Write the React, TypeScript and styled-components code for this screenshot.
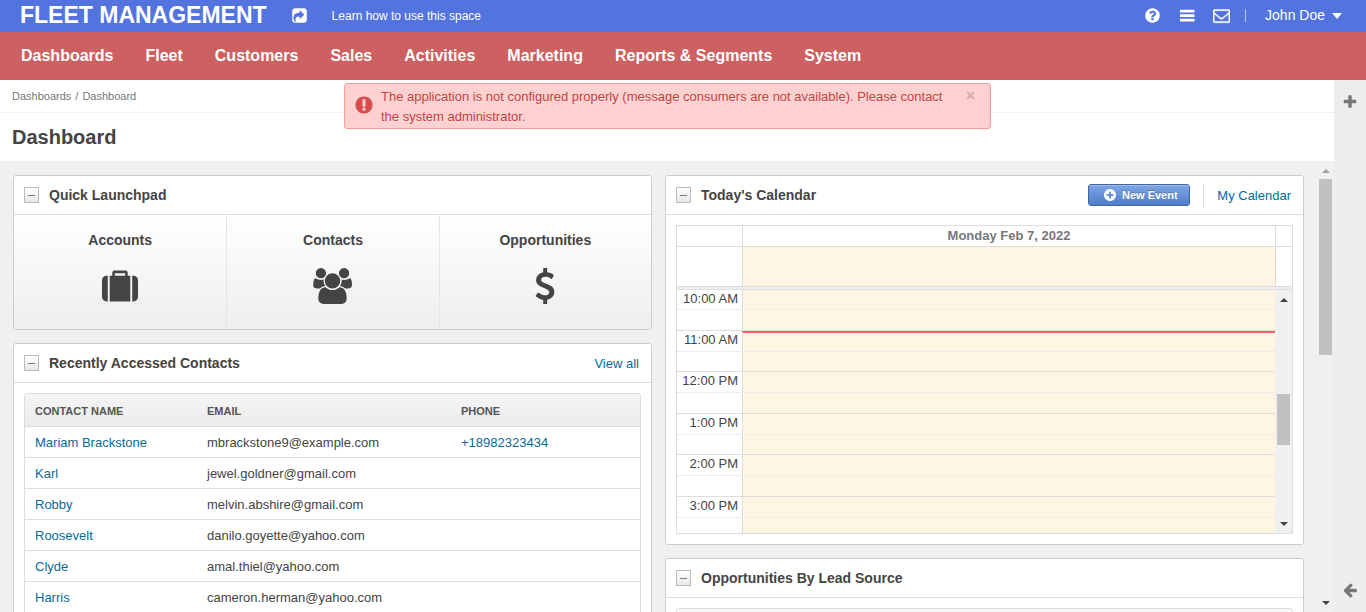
import React from 'react';
import styled, { createGlobalStyle, css } from 'styled-components';

const GlobalStyle = createGlobalStyle`
  *, *::before, *::after { box-sizing: border-box; }
  body {
    margin: 0;
    background: #fff;
    color: #444;
    font: 13px/20px "Liberation Sans", Arial, sans-serif;
  }
  h1, h2, h3, p, ul { margin: 0; padding: 0; }
  a { color: #086a95; text-decoration: none; }
  button { font-family: inherit; cursor: pointer; }
`;

/* ---------- Icons ---------- */

const icons = {
  share: 'M1005 1197l352-352q19-19 19-45t-19-45l-352-352q-30-31-69-14-40 17-40 59v160q-119 0-216 19.5t-162.5 51-114 79-76.5 95.5-44.5 109-21.5 111.5-5 110.5q0 181 167 404 11 12 25 12 7 0 13-3 22-9 19-33-44-354 62-473 46-52 130-75.5t224-23.5v160q0 42 40 59 12 5 24 5 26 0 45-19zm659-781v960q0 119-84.5 203.5t-203.5 84.5h-960q-119 0-203.5-84.5t-84.5-203.5v-960q0-119 84.5-203.5t203.5-84.5h960q119 0 203.5 84.5t84.5 203.5z',
  help: 'M1024 1376v-192q0-14-9-23t-23-9h-192q-14 0-23 9t-9 23v192q0 14 9 23t23 9h192q14 0 23-9t9-23zm256-672q0-88-55.5-163t-138.5-116-170-41q-243 0-371 213-15 24 8 42l132 100q7 6 19 6 16 0 25-12 53-68 86-92 34-24 86-24 48 0 85.5 26t37.5 59q0 38-20 61t-68 45q-63 28-115.5 86.5t-52.5 125.5v36q0 14 9 23t23 9h192q14 0 23-9t9-23q0-19 21.5-49.5t54.5-49.5q32-18 49-28.5t46-35 44.5-48 28-60.5 12.5-81zm384 192q0 209-103 385.5t-279.5 279.5-385.5 103-385.5-103-279.5-279.5-103-385.5 103-385.5 279.5-279.5 385.5-103 385.5 103 279.5 279.5 103 385.5z',
  list: 'M112 190h1624v300h-1624zM112 704h1624v300h-1624zM112 1210h1624v300h-1624z',
  mail: 'M1664 1504v-768q-32 36-69 66-268 206-426 338-51 43-83 67t-86.5 48.5-102.5 24.5h-2q-48 0-102.5-24.5t-86.5-48.5-83-67q-158-132-426-338-37-30-69-66v768q0 13 9.5 22.5t22.5 9.5h1472q13 0 22.5-9.5t9.5-22.5zm0-1051v-24.5l-.5-13-3-12.5-5.5-9-9-7.5-14-2.5h-1472q-13 0-22.5 9.5t-9.5 22.5q0 168 147 284 193 152 401 317 6 5 35 29.5t46 37.5 44.5 31.5 50.5 27.5 43 9h2q20 0 43-9t50.5-27.5 44.5-31.5 46-37.5 35-29.5q208-165 401-317 54-43 100.5-115.5t46.5-131.5zm128-37v1088q0 66-47 113t-113 47h-1472q-66 0-113-47t-47-113v-1088q0-66 47-113t113-47h1472q66 0 113 47t47 113z',
  plus: 'M1600 736v192q0 40-28 68t-68 28h-416v416q0 40-28 68t-68 28h-192q-40 0-68-28t-28-68v-416h-416q-40 0-68-28t-28-68v-192q0-40 28-68t68-28h416v-416q0-40 28-68t68-28h192q40 0 68 28t28 68v416h416q40 0 68 28t28 68z',
  arrowLeft: 'M1664 896v128q0 53-32.5 90.5t-84.5 37.5h-704l293 294q38 36 38 90t-38 90l-75 76q-37 37-90 37-52 0-91-37l-651-652q-37-37-37-90 0-52 37-91l651-650q38-38 91-38 52 0 90 38l75 74q38 38 38 91t-38 91l-293 293h704q52 0 84.5 37.5t32.5 90.5z',
  plusCircle: 'M1344 960v-128q0-26-19-45t-45-19h-256v-256q0-26-19-45t-45-19h-128q-26 0-45 19t-19 45v256h-256q-26 0-45 19t-19 45v128q0 26 19 45t45 19h256v256q0 26 19 45t45 19h128q26 0 45-19t19-45v-256h256q26 0 45-19t19-45zm320-64q0 209-103 385.5t-279.5 279.5-385.5 103-385.5-103-279.5-279.5-103-385.5 103-385.5 279.5-279.5 385.5-103 385.5 103 279.5 279.5 103 385.5z',
  alert: 'M896 128q209 0 385.5 103t279.5 279.5 103 385.5-103 385.5-279.5 279.5-385.5 103-385.5-103-279.5-279.5-103-385.5 103-385.5 279.5-279.5 385.5-103zm128 1247v-190q0-14-9-23.5t-22-9.5h-192q-13 0-23 10t-10 23v190q0 13 10 23t23 10h192q13 0 22-9.5t9-23.5zm-2-344l18-621q0-12-10-18-10-8-24-8h-220q-14 0-24 8-10 6-10 18l17 621q0 10 10 17.5t24 7.5h185q14 0 23.5-7.5t10.5-17.5z',
  suitcase: 'M640 384h512v-128h-512v128zM288 384v1280h-64q-92 0-158-66t-66-158v-832q0-92 66-158t158-66h64zM1408 384v1280h-1024v-1280h128v-160q0-40 28-68t68-28h576q40 0 68 28t28 68v160h128zM1792 608v832q0 92-66 158t-158 66h-64v-1280h64q92 0 158 66t66 158z',
  group: 'M593 896q-162 5-265 128h-134q-82 0-138-40.5t-56-118.5q0-353 124-353 6 0 43.5 21t97.5 42.5 119 21.5q67 0 133-23-5 37-5 66 0 159 93 256zm1071 637q0 120-73 189.5t-194 69.5h-874q-121 0-194-69.5t-73-189.5q0-53 3.5-103.5t14-109 26.5-108.5 43-97.5 62-81 85.5-53.5 111.5-20q10 0 43 21.5t73 48 107 48 135 21.5 135-21.5 107-48 73-48 43-21.5q61 0 111.5 20t85.5 53.5 62 81 43 97.5 26.5 108.5 14 109 3.5 103.5zm-1024-1277q0 106-75 181t-181 75-181-75-75-181 75-181 181-75 181 75 75 181zm704 384q0 159-112.5 271.5t-271.5 112.5-271.5-112.5-112.5-271.5 112.5-271.5 271.5-112.5 271.5 112.5 112.5 271.5zm576 225q0 78-56 118.5t-138 40.5h-134q-103-123-265-128 93-97 93-256 0-29-5-66 66 23 133 23 59 0 119-21.5t97.5-42.5 43.5-21q124 0 124 353zm-128-609q0 106-75 181t-181 75-181-75-75-181 75-181 181-75 181 75 75 181z',
  dollar: 'M1362 1185q0 153-99.5 263.5t-258.5 136.5v175q0 14-9 23t-23 9h-135q-13 0-22.5-9.5t-9.5-22.5v-175q-66-9-127.5-31t-101.5-44.5-74-48-46.5-37.5-17.5-18q-17-21-2-41l103-135q7-10 23-12 15-2 24 9l2 2q113 99 243 125 37 8 74 8 81 0 142.5-43t61.5-122q0-28-15-53t-33.5-42-58.5-37.5-66-32-80-32.5q-39-16-61.5-25t-61.5-26.5-62.5-31-56.5-35.5-53.5-42.5-43.5-49-35.5-58-21-66.5-8.5-78q0-138 98-242t255-134v-180q0-13 9.5-22.5t22.5-9.5h135q14 0 23 9t9 23v176q57 6 110.5 23t87 33.5 63.5 37.5 39 29 15 14q17 18 5 38l-81 146q-8 15-23 16-14 3-27-7-3-3-14.5-12t-39-26.5-58.5-32-74.5-26-85.5-11.5q-95 0-155 43t-60 111q0 26 8.5 48t29.5 41.5 39.5 33 56 31 60.5 27 70 27.5q53 20 81 31.5t76 35 75.5 42.5 62 50 53 63.5 31.5 76.5 13 94z',
};

type IconName = keyof typeof icons;

type IconProps = { name: IconName; size: number; bold?: boolean };

const Icon = ({ name, size, bold }: IconProps) => {
  const boxWidth = name === 'group' ? 1920 : 1792;
  return (
    <svg
      width={Math.round((size * boxWidth) / 1792)}
      height={size}
      viewBox={`0 0 ${boxWidth} 1792`}
      fill="currentColor"
      stroke={bold ? 'currentColor' : 'none'}
      strokeWidth={bold ? 50 : 0}
      aria-hidden="true"
    >
      <path d={icons[name]} />
    </svg>
  );
};

/* ---------- Page frame ---------- */

const Page = styled.div`
  position: relative;
  display: flex;
  flex-direction: column;
  height: 100vh;
  overflow: hidden;
`;

const TopBar = styled.header`
  display: flex;
  align-items: center;
  flex: none;
  height: 32px;
  padding: 0 24px 1px 20px;
  background: #5373df;
  color: #fff;
  a { color: #fff; }
`;

const Brand = styled.a`
  font-size: 23px;
  font-weight: bold;
  line-height: 31px;
  white-space: nowrap;
`;

const IconButton = styled.button`
  display: flex;
  padding: 0;
  border: 0;
  background: none;
  color: inherit;
`;

const ShareButton = styled(IconButton)`
  margin: 0 24px 0 24px;
`;

const LearnLink = styled.a`
  font-size: 12px;
`;

const UserTools = styled.div`
  display: flex;
  align-items: center;
  gap: 18px;
  margin-left: auto;
`;

const UserMenu = styled.button`
  display: flex;
  align-items: center;
  gap: 7px;
  margin-left: -3px;
  padding: 0 0 0 20px;
  border: 0;
  background: linear-gradient(#b9c6f2, #b9c6f2) 0 50% / 1px 13px no-repeat;
  color: #fff;
  font-size: 14px;
  line-height: 21px;
`;

const Caret = styled.span`
  border: 5px solid transparent;
  border-top: 6px solid currentColor;
  border-bottom: 0;
`;

const MainNav = styled.nav`
  display: flex;
  flex: none;
  gap: 32px;
  height: 48px;
  padding: 0 21px;
  background: #cd6060;
  a {
    color: #fff;
    font-size: 16px;
    font-weight: bold;
    line-height: 48px;
    white-space: nowrap;
  }
`;

const Workspace = styled.div`
  display: flex;
  flex: 1;
  min-height: 0;
`;

const Main = styled.main`
  display: flex;
  flex: 1;
  flex-direction: column;
  min-width: 0;
`;

const SideRail = styled.aside`
  display: flex;
  flex: none;
  flex-direction: column;
  align-items: center;
  justify-content: space-between;
  width: 32px;
  padding: 14px 0;
  background: #ededed;
  color: #777;
`;

const Breadcrumbs = styled.nav`
  display: flex;
  flex: none;
  gap: 4px;
  height: 33px;
  padding: 0 12px;
  border-bottom: 1px solid #f0f0f0;
  color: #777;
  font-size: 11px;
  line-height: 33px;
  a { color: #777; }
`;

const PageTitle = styled.h1`
  flex: none;
  padding: 0 12px;
  font-size: 20px;
  line-height: 48px;
`;

/* ---------- Notification ---------- */

const Alert = styled.div`
  position: absolute;
  top: 83px;
  left: 50%;
  z-index: 2;
  display: flex;
  align-items: flex-start;
  width: 647px;
  margin-left: -339px;
  padding: 3px 15px 1px 9px;
  border: 1px solid #f79a9a;
  border-radius: 3px;
  background: #fed1d1;
  color: #c9393a;
  text-shadow: 0 1px 0 rgba(255, 255, 255, 0.5);
  p { flex: 1; margin-left: 7px; }
`;

const AlertMark = styled.span`
  display: flex;
  align-self: center;
  padding-bottom: 4px;
  color: #d84b4b;
`;

const CloseButton = styled(IconButton)`
  margin-left: 16px;
  color: #dba9a9;
  font-size: 16px;
  font-weight: bold;
  line-height: 18px;
`;

/* ---------- Scrollbars ---------- */

const Track = styled.div`
  display: flex;
  flex: none;
  flex-direction: column;
  align-items: center;
  width: 17px;
  padding: 8px 0 7px;
  background: #f0f0f0;
`;

const Arrow = styled.span<{ $up?: boolean; $muted?: boolean }>`
  border: 4px solid transparent;
  ${({ $up, $muted }) => {
    const color = $muted ? '#a0a0a0' : '#444';
    return $up
      ? css`border-top: 0; border-bottom-color: ${color};`
      : css`border-bottom: 0; border-top-color: ${color};`;
  }}
`;

const ThumbSpace = styled.div<{ $size: number }>`
  flex: ${({ $size }) => $size} 1 0;
`;

const Thumb = styled(ThumbSpace)`
  width: 13px;
  background: #c1c1c1;
`;

type ScrollbarProps = { before: number; thumb: number; after: number; atTop?: boolean };

const Scrollbar = ({ before, thumb, after, atTop }: ScrollbarProps) => (
  <Track aria-hidden="true">
    <Arrow $up $muted={atTop} />
    <ThumbSpace $size={before} />
    <Thumb $size={thumb} />
    <ThumbSpace $size={after} />
    <Arrow />
  </Track>
);

/* ---------- Dashboard widgets ---------- */

const ScrollArea = styled.div`
  display: flex;
  flex: 1;
  min-height: 0;
  background: #f0f0f0;
`;

const Board = styled.div`
  display: grid;
  flex: 1;
  grid-template-columns: minmax(0, 1fr) minmax(0, 1fr);
  gap: 13px;
  align-items: start;
  min-width: 0;
  padding: 14px 13px 0;
  overflow: hidden;
`;

const Column = styled.div`
  display: flex;
  flex-direction: column;
  gap: 13px;
`;

const Widget = styled.section`
  overflow: hidden;
  border: 1px solid #ccc;
  border-radius: 3px;
  background: #fff;
`;

const WidgetHeader = styled.header`
  display: flex;
  align-items: center;
  height: 39px;
  padding: 0 12px 0 10px;
  border-bottom: 1px solid #ddd;
  line-height: 22px;
  h2 {
    margin: 0 auto 0 10px;
    font-size: 14px;
    line-height: 20px;
  }
`;

const HeaderLink = styled.a`
  padding-top: 1px;
`;

const Collapse = styled.button`
  display: flex;
  align-items: center;
  justify-content: center;
  width: 15px;
  height: 16px;
  padding: 0;
  border: 1px solid #bbb;
  background: linear-gradient(#fff, #e8e8e8);
  &::before {
    content: '';
    width: 7px;
    height: 1px;
    background: #777;
  }
`;

const WidgetBody = styled.div`
  padding: 10px;
`;

type PanelProps = { title: string; actions?: React.ReactNode; children: React.ReactNode };

const Panel = ({ title, actions, children }: PanelProps) => (
  <Widget>
    <WidgetHeader>
      <Collapse type="button" aria-label={`Collapse ${title}`} />
      <h2>{title}</h2>
      {actions}
    </WidgetHeader>
    {children}
  </Widget>
);

const Launchpad = styled.div`
  display: grid;
  grid-template-columns: repeat(3, 1fr);
`;

const LaunchTile = styled.a`
  display: flex;
  flex-direction: column;
  align-items: center;
  gap: 18px;
  height: 114px;
  padding-top: 15px;
  background: linear-gradient(#fff, #eee);
  color: #444;
  font-size: 14px;
  font-weight: bold;
  & + & { border-left: 1px solid #e5e5e5; }
`;

const TableFrame = styled.div`
  overflow: hidden;
  border: 1px solid #ddd;
  border-radius: 3px 3px 0 0;
`;

const ContactTable = styled.table`
  width: 100%;
  border-collapse: collapse;
  table-layout: fixed;
  th, td { padding: 2px 10px 0; text-align: left; }
  th {
    height: 32px;
    background: linear-gradient(#f5f5f5, #ececec);
    color: #555;
    font-size: 11px;
    text-transform: uppercase;
  }
  th:nth-child(1) { width: 172px; }
  th:nth-child(2) { width: 254px; }
  td { height: 31px; border-top: 1px solid #ddd; }
`;

const NewEvent = styled.button`
  display: flex;
  align-items: center;
  justify-content: center;
  gap: 5px;
  width: 102px;
  height: 22px;
  padding: 0 0 0 2px;
  border: 1px solid #41659f;
  border-radius: 3px;
  background: linear-gradient(#7ea6e6, #507dca);
  box-shadow: inset 0 1px 0 rgba(255, 255, 255, 0.25);
  color: #fff;
  font-size: 11px;
  font-weight: bold;
  text-shadow: 0 -1px 0 rgba(0, 0, 0, 0.25);
`;

const CalendarLink = styled(HeaderLink)`
  margin-left: 13px;
  padding-left: 13px;
  border-left: 1px solid #ddd;
`;

/* ---------- Calendar ---------- */

const Calendar = styled.div`
  border: 1px solid #ddd;
`;

const DayHead = styled.div<{ $height: number }>`
  display: grid;
  grid-template-columns: 65px 1fr 17px;
  height: ${({ $height }) => $height}px;
  border-bottom: 1px solid #ddd;
  color: #777;
  font-weight: bold;
  line-height: 20px;
  text-align: center;
  > * + * { border-left: 1px solid #ddd; }
`;

const AllDay = styled.span`
  background: #fdf6e2;
`;

const Divider = styled.div`
  height: 3px;
  border-bottom: 1px solid #ddd;
  background: #eee;
`;

const DayView = styled.div`
  display: flex;
  height: 243px;
  overflow: hidden;
`;

const Hours = styled.div`
  flex: 1;
  min-width: 0;
`;

const HalfHour = styled.div<{ $last?: boolean; $tall?: boolean }>`
  display: grid;
  grid-template-columns: 65px 1fr;
  height: ${({ $tall }) => ($tall ? 21 : 20)}px;
  border-bottom: 1px ${({ $last }) => ($last ? 'solid' : 'dotted')} #ddd;
  line-height: 18px;
`;

const TimeCell = styled.span`
  padding-right: 4px;
  text-align: right;
  white-space: nowrap;
`;

const SlotCell = styled.span<{ $now?: boolean }>`
  border-left: 1px solid #ddd;
  background: #fdf6e2;
  ${({ $now }) => $now && css`border-top: 2px solid #fc5e5e;`}
`;

const ChartFrame = styled.div`
  height: 240px;
  border: 1px solid #ddd;
  border-radius: 3px;
  background: #f8f8f8;
`;

/* ---------- Data ---------- */

const navItems = ['Dashboards', 'Fleet', 'Customers', 'Sales', 'Activities', 'Marketing', 'Reports & Segments', 'System'];

const tiles: { label: string; icon: IconName }[] = [
  { label: 'Accounts', icon: 'suitcase' },
  { label: 'Contacts', icon: 'group' },
  { label: 'Opportunities', icon: 'dollar' },
];

const contacts = [
  { name: 'Mariam Brackstone', email: 'mbrackstone9@example.com', phone: '+18982323434' },
  { name: 'Karl', email: 'jewel.goldner@gmail.com' },
  { name: 'Robby', email: 'melvin.abshire@gmail.com' },
  { name: 'Roosevelt', email: 'danilo.goyette@yahoo.com' },
  { name: 'Clyde', email: 'amal.thiel@yahoo.com' },
  { name: 'Harris', email: 'cameron.herman@yahoo.com' },
];

const hours = ['10:00 AM', '11:00 AM', '12:00 PM', '1:00 PM', '2:00 PM', '3:00 PM'];

export default function App() {
  return (
    <Page>
      <GlobalStyle />
      <TopBar>
        <Brand href="#">FLEET MANAGEMENT</Brand>
        <ShareButton type="button" aria-label="Share"><Icon name="share" size={17} /></ShareButton>
        <LearnLink href="#">Learn how to use this space</LearnLink>
        <UserTools>
          <IconButton type="button" aria-label="Help"><Icon name="help" size={17} /></IconButton>
          <IconButton type="button" aria-label="Menu"><Icon name="list" size={16} /></IconButton>
          <IconButton type="button" aria-label="Mail"><Icon name="mail" size={17} bold /></IconButton>
          <UserMenu type="button">John Doe<Caret /></UserMenu>
        </UserTools>
      </TopBar>
      <MainNav>
        {navItems.map((item) => <a key={item} href="#">{item}</a>)}
      </MainNav>

      <Alert role="alert">
        <AlertMark><Icon name="alert" size={20} /></AlertMark>
        <p>
          The application is not configured properly (message consumers are not available). Please
          contact the system administrator.
        </p>
        <CloseButton type="button" aria-label="Close">×</CloseButton>
      </Alert>

      <Workspace>
        <Main>
          <Breadcrumbs aria-label="Breadcrumb">
            <a href="#">Dashboards</a>
            <span>/</span>
            <a href="#">Dashboard</a>
          </Breadcrumbs>
          <PageTitle>Dashboard</PageTitle>
          <ScrollArea>
            <Board>
              <Column>
                <Panel title="Quick Launchpad">
                  <Launchpad>
                    {tiles.map(({ label, icon }) => (
                      <LaunchTile key={label} href="#">
                        {label}
                        <Icon name={icon} size={36} />
                      </LaunchTile>
                    ))}
                  </Launchpad>
                </Panel>
                <Panel title="Recently Accessed Contacts" actions={<HeaderLink href="#">View all</HeaderLink>}>
                  <WidgetBody>
                    <TableFrame>
                      <ContactTable>
                        <thead>
                          <tr><th>Contact name</th><th>Email</th><th>Phone</th></tr>
                        </thead>
                        <tbody>
                          {contacts.map(({ name, email, phone }) => (
                            <tr key={name}>
                              <td><a href="#">{name}</a></td>
                              <td>{email}</td>
                              <td>{phone && <a href={`tel:${phone}`}>{phone}</a>}</td>
                            </tr>
                          ))}
                        </tbody>
                      </ContactTable>
                    </TableFrame>
                  </WidgetBody>
                </Panel>
              </Column>
              <Column>
                <Panel
                  title="Today's Calendar"
                  actions={
                    <>
                      <NewEvent type="button"><Icon name="plusCircle" size={14} />New Event</NewEvent>
                      <CalendarLink href="#">My Calendar</CalendarLink>
                    </>
                  }
                >
                  <WidgetBody>
                    <Calendar>
                      <DayHead $height={21}><span /><span>Monday Feb 7, 2022</span><span /></DayHead>
                      <DayHead $height={40}><span /><AllDay /><span /></DayHead>
                      <Divider />
                      <DayView>
                        <Hours>
                          {hours.map((hour, i) => (
                            <React.Fragment key={hour}>
                              <HalfHour $tall={i > 0}>
                                <TimeCell>{hour}</TimeCell>
                                <SlotCell $now={hour === '11:00 AM'} />
                              </HalfHour>
                              <HalfHour $last $tall={i % 2 === 0}>
                                <span />
                                <SlotCell />
                              </HalfHour>
                            </React.Fragment>
                          ))}
                        </Hours>
                        <Scrollbar before={92} thumb={51} after={77} />
                      </DayView>
                    </Calendar>
                  </WidgetBody>
                </Panel>
                <Panel title="Opportunities By Lead Source">
                  <WidgetBody><ChartFrame /></WidgetBody>
                </Panel>
              </Column>
            </Board>
            <Scrollbar before={6} thumb={176} after={246} atTop />
          </ScrollArea>
        </Main>
        <SideRail>
          <IconButton type="button" aria-label="Pin page"><Icon name="plus" size={16} /></IconButton>
          <IconButton type="button" aria-label="Collapse panel"><Icon name="arrowLeft" size={16} /></IconButton>
        </SideRail>
      </Workspace>
    </Page>
  );
}
